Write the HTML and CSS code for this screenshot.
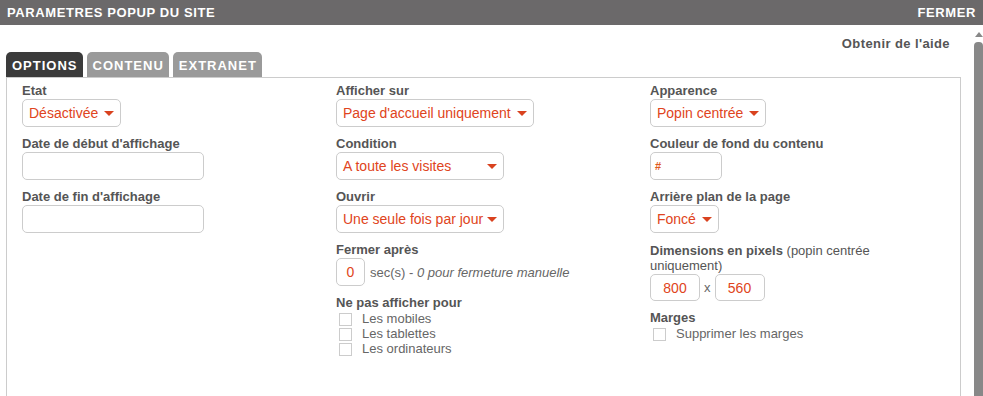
FILE: index.html
```html
<!DOCTYPE html>
<html lang="fr">
<head>
<meta charset="utf-8">
<title>Paramètres popup du site</title>
<link rel="stylesheet" href="styles.css">
</head>
<body>
<div class="topbar">
  <span class="title">PARAMETRES POPUP DU SITE</span>
  <span class="close">FERMER</span>
</div>
<div class="main">
  <div class="panel">
    <div class="help">Obtenir de l'aide</div>
    <div class="tabs">
      <div class="tab active">OPTIONS</div>
      <div class="tab">CONTENU</div>
      <div class="tab">EXTRANET</div>
    </div>
    <div class="box">
      <div class="col">
        <div class="field">
          <div class="lbl">Etat</div>
          <div class="select">Désactivée<span class="caret"></span></div>
        </div>
        <div class="field">
          <div class="lbl">Date de début d'affichage</div>
          <div class="input date"></div>
        </div>
        <div class="field">
          <div class="lbl">Date de fin d'affichage</div>
          <div class="input date"></div>
        </div>
      </div>
      <div class="col">
        <div class="field">
          <div class="lbl">Afficher sur</div>
          <div class="select">Page d'accueil uniquement<span class="caret"></span></div>
        </div>
        <div class="field">
          <div class="lbl">Condition</div>
          <div class="select wide">A toute les visites<span class="caret"></span></div>
        </div>
        <div class="field">
          <div class="lbl">Ouvrir</div>
          <div class="select wide">Une seule fois par jour<span class="caret"></span></div>
        </div>
        <div class="field">
          <div class="lbl">Fermer après</div>
          <div class="inline">
            <div class="input num sec">0</div>
            <span class="note">sec(s) - <i>0 pour fermeture manuelle</i></span>
          </div>
        </div>
        <div class="field">
          <div class="lbl">Ne pas afficher pour</div>
          <div class="check"><span class="box-c"></span>Les mobiles</div>
          <div class="check"><span class="box-c"></span>Les tablettes</div>
          <div class="check"><span class="box-c"></span>Les ordinateurs</div>
        </div>
      </div>
      <div class="col">
        <div class="field">
          <div class="lbl">Apparence</div>
          <div class="select">Popin centrée<span class="caret"></span></div>
        </div>
        <div class="field">
          <div class="lbl">Couleur de fond du contenu</div>
          <div class="input color"><b>#</b></div>
        </div>
        <div class="field">
          <div class="lbl">Arrière plan de la page</div>
          <div class="select">Foncé<span class="caret"></span></div>
        </div>
        <div class="field">
          <div class="lbl lbl-wrap">
            <div>Dimensions en pixels <span class="normal">(popin centrée</span></div>
            <div class="normal">uniquement)</div>
          </div>
          <div class="inline">
            <div class="input num dim">800</div>
            <span class="x">x</span>
            <div class="input num dim">560</div>
          </div>
        </div>
        <div class="field">
          <div class="lbl">Marges</div>
          <div class="check"><span class="box-c"></span>Supprimer les marges</div>
        </div>
      </div>
    </div>
  </div>
  <div class="scrollbar">
    <div class="arrow"></div>
    <div class="thumb"></div>
  </div>
</div>
</body>
</html>
```

FILE: styles.css
```css
* { box-sizing: border-box; }
html, body { margin: 0; padding: 0; background: #fff; }
body {
  font-family: "Liberation Sans", Arial, sans-serif;
  color: #555;
  width: 983px;
  height: 396px;
  overflow: hidden;
}
.topbar {
  height: 25px;
  background: #6b696a;
  color: #fff;
  font-weight: bold;
  font-size: 13px;
  letter-spacing: 0.6px;
  display: flex;
  justify-content: space-between;
  align-items: center;
  padding: 0 7px 1px 7px;
}
.main {
  display: flex;
  height: 371px;
}
.panel {
  width: 974px;
  padding: 0 13px 0 6px;
}
.help {
  text-align: right;
  font-weight: bold;
  font-size: 13px;
  letter-spacing: 0.4px;
  color: #555;
  padding: 12px 11px 0 0;
  height: 27px;
  line-height: 14px;
}
.tabs {
  display: flex;
  gap: 4px;
  height: 25px;
}
.tab {
  background: #9a9a9a;
  color: #fff;
  font-weight: bold;
  font-size: 13px;
  letter-spacing: 1px;
  padding: 0 5px 0 6px;
  line-height: 27px;
  border-radius: 5px 5px 0 0;
}
.tab.active { background: #3b3b3b; }
.box {
  border: 1px solid #ccc;
  height: 400px;
  padding: 6px 0 0 15px;
  display: grid;
  grid-template-columns: 314px 314px 1fr;
}
.field { margin-bottom: 10px; }
.lbl {
  font-weight: bold;
  font-size: 13px;
  line-height: 14px;
  margin-bottom: 1px;
  color: #555;
}
.lbl-wrap { line-height: 15px; white-space: nowrap; }
.lbl .normal { font-weight: normal; }
.select {
  display: inline-flex;
  align-items: center;
  justify-content: space-between;
  gap: 6px;
  height: 28px;
  border: 1px solid #ccc;
  border-radius: 5px;
  padding: 0 6px 0 6px;
  color: #e04420;
  font-size: 14px;
  white-space: nowrap;
}
.select.wide { width: 168px; gap: 3px; }
.caret {
  flex: none;
  width: 0;
  height: 0;
  border-left: 5px solid transparent;
  border-right: 5px solid transparent;
  border-top: 5px solid #d9421f;
  margin-top: 1px;
}
.input {
  height: 28px;
  border: 1px solid #ccc;
  border-radius: 5px;
  color: #e04420;
  font-size: 14px;
}
.input.date { width: 182px; }
.input.color {
  width: 72px;
  display: flex;
  align-items: center;
  padding-left: 4px;
  font-size: 11px;
  color: #e05a20;
}
.inline { display: flex; align-items: center; }
.input.num {
  display: flex;
  align-items: center;
  justify-content: center;
}
.input.sec { width: 29px; }
.input.dim { width: 50px; height: 27px; }
.note { font-size: 13px; color: #666; margin-left: 5px; }
.x { font-size: 13px; color: #666; margin: 0 4px 0 4px; }
.check {
  display: flex;
  align-items: center;
  font-size: 13px;
  line-height: 15px;
  height: 15px;
  color: #666;
}
.box-c {
  width: 13px;
  height: 13px;
  border: 1px solid #ccc;
  margin: 2px 10px 0 3px;
  background: #fff;
}
.scrollbar {
  width: 9px;
  display: flex;
  flex-direction: column;
  align-items: center;
  padding-top: 7px;
}
.arrow {
  width: 0;
  height: 0;
  border-left: 4px solid transparent;
  border-right: 4px solid transparent;
  border-bottom: 5px solid #888;
}
.thumb {
  margin-top: 5px;
  width: 9px;
  flex: 1;
  background: #888;
  border-radius: 4px 4px 0 0;
}
```
